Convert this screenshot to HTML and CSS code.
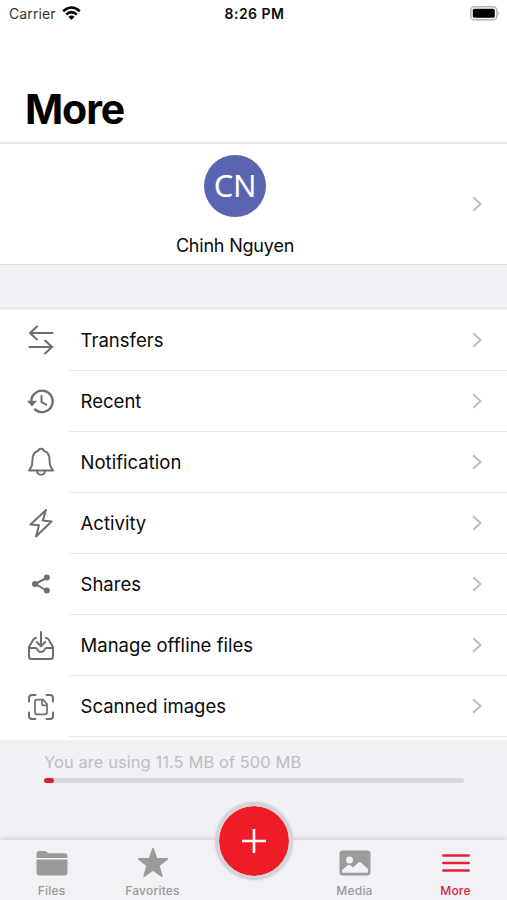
FILE: index.html
```html
<!DOCTYPE html>
<html lang="en">
<head>
<meta charset="utf-8">
<title>More</title>
<link rel="stylesheet" href="styles.css">
</head>
<body>
<div class="screen">
  <header class="header">
    <div class="status">
      <div class="carrier"><span>Carrier</span>
        <svg class="wifi" width="19" height="15" viewBox="0 0 19 15" fill="none" stroke="#000" stroke-width="2.6"><path d="M1.2 5.2Q9.5-2.2 17.8 5.2M4.2 8.4Q9.5 3.8 14.8 8.4"/><path d="M6.4 10.7Q9.5 8.4 12.6 10.7L9.5 14Z" fill="#000" stroke="none"/></svg>
      </div>
      <div class="time">8:26 PM</div>
      <svg class="battery" width="31" height="15" viewBox="0 0 31 15"><rect x="1.800" y=".8" width="26" height="13" rx="3.6" fill="#fff" stroke="#b5b5b5" stroke-width="1.5"/><rect x="3.800" y="2.800" width="22" height="9" rx="1.500"/><path d="M29.200 5q2 2.300 0 4.600z" fill="#b0b0b0"/></svg>
    </div>
    <h1>More</h1>
  </header>
  <section class="profile">
    <div class="person"><div class="avatar">CN</div><div class="name">Chinh Nguyen</div></div>
    <svg class="chevron" viewBox="0 0 10 16"><path d="M1.200 1.300 8.500 8l-7.300 6.700"/></svg>
  </section>
  <div class="gap"></div>
  <nav class="list">
    <a class="row"><svg class="icon" viewBox="0 0 30 30"><path d="M26.500 8H4M11 1.500 4 8l7 6.500M3.500 22h23M19 15.500 26 22l-7 6.500"/></svg><span class="cell"><span>Transfers</span><svg class="chevron" viewBox="0 0 10 16"><path d="M1.200 1.300 8.500 8l-7.300 6.700"/></svg></span></a>
    <a class="row"><svg class="icon" viewBox="0 0 30 30"><path class="bold" d="M5.300 16A10.700 10.700 0 1 1 9 23.500"/><path d="M15.500 10v6.200l4.800 2.500"/><path class="solid" d="M1 14.700h10l-5 5.800z"/></svg><span class="cell"><span>Recent</span><svg class="chevron" viewBox="0 0 10 16"><path d="M1.200 1.300 8.500 8l-7.300 6.700"/></svg></span></a>
    <a class="row"><svg class="icon" viewBox="0 0 30 30"><path d="M3 23.500c3-4 3.300-5.500 3.500-11C6.700 7.500 8.500 4.800 12 4c.5-1.800 1.200-2.300 3-2.300s2.500.5 3 2.300c3.500.8 5.300 3.500 5.500 8.500.2 5.500.5 7 3.500 11zM11 24c.5 5 7.500 5 8 0"/></svg><span class="cell"><span>Notification</span><svg class="chevron" viewBox="0 0 10 16"><path d="M1.200 1.300 8.500 8l-7.300 6.700"/></svg></span></a>
    <a class="row"><svg class="icon" viewBox="0 0 30 30"><path d="M20 2 4.500 16.500l8.500.8L10 28.500l15.500-15-8.700-.9z"/></svg><span class="cell"><span>Activity</span><svg class="chevron" viewBox="0 0 10 16"><path d="M1.200 1.300 8.500 8l-7.300 6.700"/></svg></span></a>
    <a class="row"><svg class="icon" viewBox="0 0 30 30"><path d="M20.500 9 9 15l11.500 6.500"/><g class="solid"><circle cx="20.800" cy="8.600" r="3"/><circle cx="9" cy="15" r="3"/><circle cx="20.800" cy="21.500" r="3"/></g></svg><span class="cell"><span>Shares</span><svg class="chevron" viewBox="0 0 10 16"><path d="M1.200 1.300 8.500 8l-7.300 6.700"/></svg></span></a>
    <a class="row"><svg class="icon" viewBox="0 0 30 30"><path d="M10 7q-1.800 0-2.800 1.700L3 16v9.500q0 2.500 2.500 2.500h19q2.500 0 2.500-2.500V16l-4.200-7.300Q21.800 7 20 7M3 17h6.500q1 0 1.500 1 1.200 3 4 3t4-3q.5-1 1.500-1H27M15 1v14M10.800 11l4.200 4.200 4.200-4.200"/></svg><span class="cell"><span>Manage offline files</span><svg class="chevron" viewBox="0 0 10 16"><path d="M1.200 1.300 8.500 8l-7.300 6.700"/></svg></span></a>
    <a class="row"><svg class="icon" viewBox="0 0 30 30"><path d="M3 9.500V6q0-3 3-3h3.500M20.500 3H24q3 0 3 3v3.500M27 20.500V24q0 3-3 3h-3.500M9.500 27H6q-3 0-3-3v-3.500"/><path class="fine" d="M17 7.700h-6q-2 0-2 2v10.600q0 2 2 2h8q2 0 2-2v-8.300zM16 8v4q0 1.400 1.400 1.400H21"/></svg><span class="cell"><span>Scanned images</span><svg class="chevron" viewBox="0 0 10 16"><path d="M1.200 1.300 8.500 8l-7.300 6.700"/></svg></span></a>
  </nav>
  <section class="quota"><div class="usage">You are using 11.5 MB of 500 MB</div><div class="track"><div class="fill"></div></div></section>
  <footer class="tabs">
    <div class="tab"><svg width="32" height="26" viewBox="0 0 32 26" fill="#9b9b9b"><path d="M.5 8V4Q.5 1 3.500 1h5q1.200 0 2.200 1l1 .8q.6.500 1.600.5H28.500q3 0 3 3V8zM.5 9.500h31v13q0 3-3 3h-25q-3 0-3-3z"/></svg><span>Files</span></div>
    <div class="tab"><svg width="32" height="32" viewBox="0 0 32 32" fill="#9b9b9b" stroke="#9b9b9b" stroke-width="2" stroke-linejoin="round"><path d="m16 2 3.500 10H30l-8.400 6.500L24.700 29 16 22.700 7.300 29l3.100-10.500L2 12h10.500z"/></svg><span>Favorites</span></div>
    <div class="slot"><button class="add"><svg width="26" height="26" viewBox="0 0 26 26"><path d="M13 1v24M1 13h24" stroke="#fff" stroke-width="2.600"/></svg></button></div>
    <div class="tab"><svg width="32" height="26" viewBox="0 0 32 26"><rect x=".5" y=".5" width="31" height="25" rx="3.200" fill="#9b9b9b"/><circle cx="10.500" cy="10" r="3.500" fill="#f2f1f6"/><path d="M3 22v-2l6-5q1-.7 2 0l3 2.500 5.500-5q1.200-1 2.400 0L29 19v3q0 .8-.8.8H3.800Q3 22.800 3 22z" fill="#f2f1f6"/></svg><span>Media</span></div>
    <div class="tab active"><svg width="28" height="20" viewBox="0 0 28 20"><path d="M1.300 2.500h25.400M1.300 10h25.400M1.300 17.500h25.400" stroke="#df2338" stroke-width="2.500" stroke-linecap="round"/></svg><span>More</span></div>
  </footer>
</div>
</body>
</html>
```
FILE: styles.css
```css
* { box-sizing: border-box; }
body { margin: 0; font-family: Inter, "Liberation Sans", sans-serif; color: #0a0a0a; background: #f1f0f5; }
.screen { width: 507px; height: 900px; display: flex; flex-direction: column; overflow: hidden; }
.header { height: 144px; flex: none; background: #fff; border-bottom: 2px solid #e5e5e8; }
.status { display: grid; grid-template-columns: 1fr auto 1fr; height: 27px; padding: 0 7px 0 9px; align-items: center; font-size: 14px; }
.carrier { display: flex; align-items: center; gap: 6px; color: #333; letter-spacing: .1px; }
.wifi { margin-top: -1px; }
.time { font-weight: 600; letter-spacing: .5px; }
.battery { justify-self: end; margin-top: -1px; }
h1 { margin: 57px 0 0 25px; font-size: 41px; line-height: 50px; font-weight: 700; letter-spacing: -1.1px; color: #000; }
.profile { height: 121px; flex: none; display: flex; align-items: center; padding-right: 25px; background: #fff; border-bottom: 1px solid #dedee2; }
.person { flex: 1; height: 121px; padding: 11px 0 0 0; margin-right: 2px; display: flex; flex-direction: column; align-items: center; }
.avatar { width: 62px; height: 62px; border-radius: 50%; background: #5b64b0; color: #fff; font: 31px/61px "Noto Sans", "Open Sans", sans-serif; letter-spacing: -.3px; text-align: center; }
.name { margin-top: 17px; font-size: 18px; line-height: 24px; letter-spacing: -.2px; }
.chevron { width: 10px; height: 16px; flex: none; fill: none; stroke: #bfbfc1; stroke-width: 2.2; }
.gap { height: 44px; flex: none; border-bottom: 1px solid #dedee2; }
.list { height: 431px; flex: none; padding-top: .5px; background: #fff; overflow: hidden; }
.row { height: 61.1px; display: flex; align-items: center; padding-left: 26px; }
.icon { width: 30px; height: 30px; margin-right: 13px; flex: none; fill: none; stroke: #6e6e6e; stroke-width: 2; stroke-linejoin: round; stroke-linecap: round; }
.icon .solid { fill: #6e6e6e; stroke: none; }
.icon .bold { stroke-width: 2.4; }
.icon .fine { stroke-width: 1.7; }
.cell { flex: 1; height: 100%; display: flex; align-items: center; justify-content: space-between; padding: 0 25px 0 11.5px; border-bottom: 1px solid #e6e6e8; font-size: 18.5px; letter-spacing: .03px; }
.quota { flex: 1; padding: 11px 43px 0 44px; }
.usage { font-size: 16.5px; line-height: 22px; letter-spacing: .06px; color: #bdbdc0; }
.track { height: 5px; margin-top: 5px; border-radius: 3px; background: #d8d7dc; }
.fill { width: 10px; height: 5px; border-radius: 3px; background: #e31e2b; }
.tabs { height: 60px; flex: none; display: grid; grid-template-columns: repeat(5, 1fr); padding: 0 1px; background: #f2f1f6; box-shadow: 0 -1px 6px #c5c5cb; }
.tab { display: grid; grid-template-rows: 45px 12px; justify-items: center; align-items: center; font-size: 12px; line-height: 12px; font-weight: 500; letter-spacing: .2px; color: #999; }
.active { color: #e22036; }
.slot { display: flex; justify-content: center; }
.add { width: 78px; height: 78px; margin-top: -38px; flex: none; padding: 0; display: flex; align-items: center; justify-content: center; border: 4px solid #d3d3d9; border-radius: 50%; background: #ed1c26; background-clip: padding-box; box-shadow: 0 0 3px #d0d0d7; }
```
